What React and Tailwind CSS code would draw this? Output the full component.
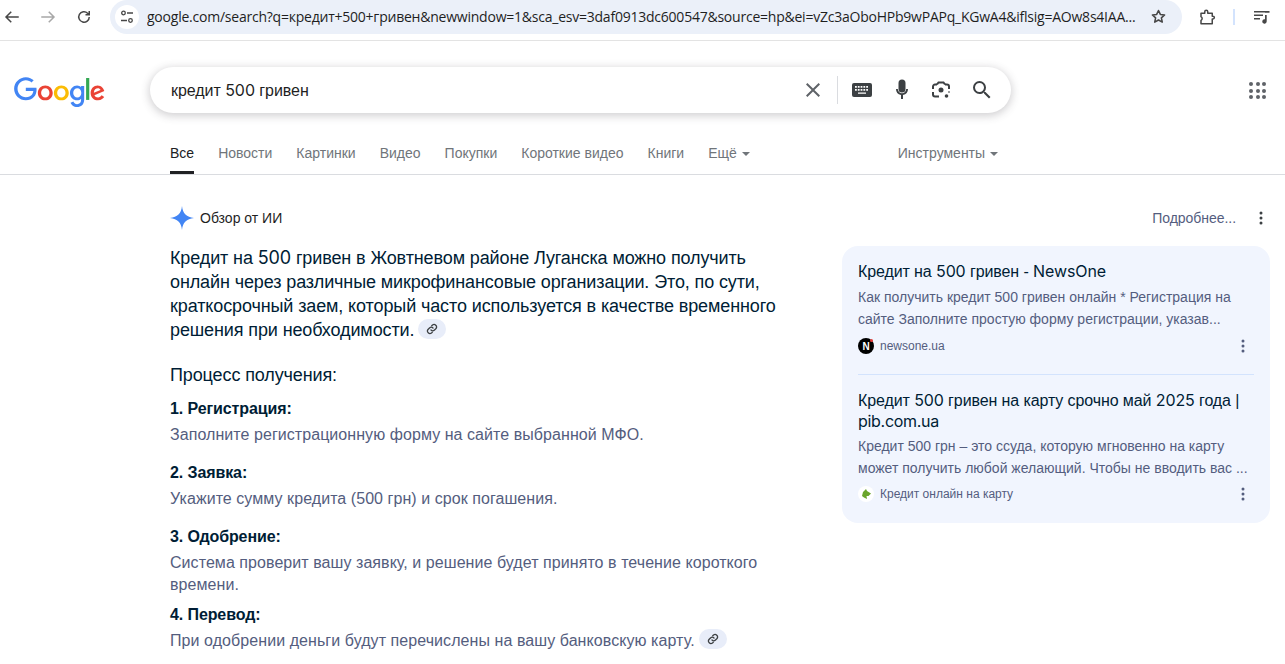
import React from "react";

const Dots = ({ className = "" }) => (
  <svg width="16" height="16" viewBox="0 0 16 16" className={className} fill="currentColor">
    <circle cx="8" cy="3" r="1.5" /><circle cx="8" cy="8" r="1.5" /><circle cx="8" cy="13" r="1.5" />
  </svg>
);

const LinkChip = () => (
  <span className="inline-flex items-center justify-center w-[28px] h-[20px] rounded-full bg-[#e8edf9] align-[1px] ml-[4px]">
    <svg width="12" height="12" viewBox="0 0 24 24" fill="none" stroke="#3c4043" strokeWidth="2.6" strokeLinecap="round">
      <path d="M10 14a5 5 0 0 0 7 0l3-3a5 5 0 0 0-7-7l-1.500 1.500" />
      <path d="M14 10a5 5 0 0 0-7 0l-3 3a5 5 0 0 0 7 7l1.500-1.500" />
    </svg>
  </span>
);

const Caret = () => <span className="inline-block w-0 h-0 border-x-[4px] border-x-transparent border-t-[4px] border-t-[#70757a] ml-[5px] align-[2px]" />;
const G = ({ children }) => <span className="font-['Inter',sans-serif]">{children}</span>;

const tabs = ["Новости", "Картинки", "Видео", "Покупки", "Короткие видео", "Книги"];

const steps = [
  ["1. Регистрация:", "Заполните регистрационную форму на сайте выбранной МФО.", "h-[64px]"],
  ["2. Заявка:", "Укажите сумму кредита (500 грн) и срок погашения.", "h-[64px]"],
  ["3. Одобрение:", "Система проверит вашу заявку, и решение будет принято в течение короткого времени.", "h-[78px]"],
];

export default function App() {
  return (
    <div className="w-[1285px] h-[664px] overflow-hidden bg-white font-['Liberation_Sans',sans-serif]">
      {/* Browser bar */}
      <div className="h-[41px] border-b border-[#e3e3e3] flex items-center">
        <div className="flex items-center w-[110px] pl-[3px] gap-[18px] text-[#474747] -mt-[6px]">
          <svg width="18" height="18" viewBox="0 0 24 24" fill="none" stroke="#474747" strokeWidth="2"><path d="M21 12H4M11 5l-7 7 7 7" /></svg>
          <svg width="18" height="18" viewBox="0 0 24 24" fill="none" stroke="#a8a8a8" strokeWidth="2"><path d="M3 12h17M13 5l7 7-7 7" /></svg>
          <svg width="18" height="18" viewBox="0 0 24 24" fill="none" stroke="#474747" strokeWidth="2"><path d="M19 12a7 7 0 1 1-2.200-5.100L19 9M19 4v5h-5" /></svg>
        </div>
        <div className="w-[1072px] h-[34px] -mt-[7px] rounded-full bg-[#ebf0f9] flex items-center pl-[5px] pr-[13px]">
          <div className="w-[24px] h-[24px] rounded-full bg-white flex items-center justify-center shrink-0">
            <svg width="14" height="14" viewBox="0 0 14 14" fill="none" stroke="#474747" strokeWidth="1.3"><circle cx="3.5" cy="3" r="1.8" /><path d="M7 3h6M1 10.500h6" /><circle cx="10.500" cy="10.500" r="1.800" /></svg>
          </div>
          <span className="ml-[8px] w-[990px] shrink-0 text-[14px] text-[#1f1f1f] whitespace-nowrap overflow-hidden font-['Open_Sans',sans-serif] tracking-[-0.23px]">google.com/search?q=кредит+500+гривен&amp;newwindow=1&amp;sca_esv=3daf0913dc600547&amp;source=hp&amp;ei=vZc3aOboHPb9wPAPq_KGwA4&amp;iflsig=AOw8s4IAA...</span>
          <svg className="ml-[13px]" width="17" height="17" viewBox="0 0 24 24" fill="none" stroke="#474747" strokeWidth="2.2" strokeLinejoin="round"><path d="M12 3.500l2.600 5.600 6 .7-4.500 4.100 1.200 6L12 17l-5.300 2.900 1.200-6L3.400 9.800l6-.7z" /></svg>
        </div>
        <div className="flex items-center ml-[16px] -mt-[7px]">
          <svg width="18" height="18" viewBox="0 0 24 24" fill="none" stroke="#474747" strokeWidth="2" strokeLinejoin="round"><path d="M4 7h5V5a2 2 0 0 1 4 0v2h6v4h1a1.800 1.800 0 0 1 0 3.600h-1V21H4v-4.500a2.800 2.800 0 0 0 0-5z" /></svg>
          <div className="ml-[17px] w-[2px] h-[16px] bg-[#d3e3fd]" />
          <svg className="ml-[18px]" width="18" height="18" viewBox="0 0 18 18" fill="#474747"><path d="M1 3h11v1.500H1zM1 6.500h9V8H1zM1 10h6v1.500H1z" /><path d="M12 7h1.700v6.500a2.200 2.200 0 1 1-1.700-2.200zM12 3h4.500v1.700H12z" /></svg>
        </div>
      </div>

      {/* Search header */}
      <div className="h-[96px] flex items-start pt-[26px]">
        <div className="w-[150px] pl-[14px] pt-[10px] shrink-0">
          <svg width="91" height="31" viewBox="0 0 272 92" preserveAspectRatio="none">
            <path fill="#EA4335" d="M115.750 47.180c0 12.770-9.990 22.180-22.250 22.180s-22.250-9.410-22.250-22.180C71.250 34.320 81.240 25 93.500 25s22.250 9.320 22.250 22.180zm-9.740 0c0-7.980-5.790-13.440-12.510-13.440S80.990 39.200 80.990 47.180c0 7.900 5.790 13.440 12.510 13.440s12.510-5.550 12.510-13.440z" />
            <path fill="#FBBC05" d="M163.750 47.180c0 12.770-9.990 22.180-22.250 22.180s-22.250-9.410-22.250-22.180c0-12.850 9.990-22.180 22.250-22.180s22.250 9.320 22.250 22.180zm-9.740 0c0-7.980-5.790-13.440-12.510-13.440s-12.510 5.460-12.510 13.440c0 7.900 5.790 13.440 12.510 13.440s12.510-5.550 12.510-13.440z" />
            <path fill="#4285F4" d="M209.750 26.340v39.820c0 16.380-9.660 23.070-21.080 23.070-10.750 0-17.220-7.190-19.660-13.070l8.480-3.530c1.510 3.610 5.210 7.870 11.170 7.870 7.310 0 11.840-4.510 11.840-13v-3.190h-.34c-2.180 2.690-6.380 5.040-11.680 5.040-11.090 0-21.250-9.660-21.250-22.090 0-12.520 10.160-22.260 21.250-22.260 5.290 0 9.490 2.350 11.680 4.960h.34v-3.610h9.250zm-8.560 20.920c0-7.810-5.210-13.520-11.840-13.520-6.720 0-12.350 5.710-12.350 13.520 0 7.730 5.630 13.360 12.350 13.360 6.630 0 11.840-5.630 11.840-13.360z" />
            <path fill="#34A853" d="M225 3v65h-9.500V3h9.500z" />
            <path fill="#EA4335" d="M262.020 54.480l7.560 5.040c-2.440 3.610-8.320 9.830-18.490 9.830-12.610 0-22.030-9.750-22.030-22.180 0-13.180 9.500-22.180 20.940-22.180 11.520 0 17.160 9.170 19 14.120l1.010 2.520-29.660 12.280c2.270 4.450 5.800 6.720 10.750 6.720 4.960 0 8.400-2.440 10.920-6.150zm-23.280-7.980l19.830-8.230c-1.090-2.770-4.370-4.700-8.230-4.700-4.950 0-11.840 4.370-11.600 12.930z" />
            <path fill="#4285F4" d="M35.290 41.410V32H67c.31 1.640.47 3.580.47 5.680 0 7.060-1.930 15.790-8.150 22.010-6.050 6.300-13.780 9.660-24.020 9.660C16.320 69.350.36 53.890.36 34.910.36 15.930 16.320.470 35.300.470c10.500 0 17.980 4.120 23.600 9.490l-6.640 6.640c-4.030-3.780-9.490-6.720-16.970-6.720-13.860 0-24.700 11.170-24.700 25.030 0 13.860 10.840 25.030 24.700 25.030 8.990 0 14.110-3.610 17.390-6.890 2.660-2.660 4.410-6.460 5.100-11.650l-22.490.010z" />
          </svg>
        </div>
        <div className="w-[861px] h-[46px] rounded-full bg-white shadow-[0_2px_8px_1px_rgba(64,60,67,0.24)] flex items-center pl-[21px] shrink-0">
          <span className="text-[16px] text-[#1f1f1f] w-[626px] shrink-0 tracking-[-0.05px]">кредит <G>500</G> гривен</span>
          <svg width="24" height="24" viewBox="0 0 24 24" fill="#5f6368" className="ml-[4px]"><path d="M19 6.410 17.590 5 12 10.590 6.410 5 5 6.410 10.590 12 5 17.590 6.410 19 12 13.410 17.590 19 19 17.590 13.410 12z" /></svg>
          <div className="w-px h-[28px] bg-[#dadce0] ml-[12px]" />
          <svg width="20" height="14" viewBox="0 0 20 14" className="ml-[14px]" fill="#3c4043"><path d="M2 0h16a2 2 0 0 1 2 2v10a2 2 0 0 1-2 2H2a2 2 0 0 1-2-2V2a2 2 0 0 1 2-2z" /><path fill="#fff" d="M3 3h1.800v1.800H3zM5.800 3h1.800v1.800H5.800zM8.600 3h1.800v1.800H8.600zM11.400 3h1.800v1.800h-1.800zM14.200 3H16v1.800h-1.800zM3 6h1.800v1.800H3zM5.800 6h1.800v1.800H5.800zM8.600 6h1.800v1.800H8.600zM11.400 6h1.800v1.800h-1.800zM14.200 6H16v1.800h-1.800zM6 9.500h8v1.300H6z" /></svg>
          <svg width="24" height="24" viewBox="0 0 24 24" className="ml-[18px]" fill="#3c4043"><path d="M12 14.500a3.500 3.500 0 0 0 3.500-3.500V5a3.500 3.500 0 0 0-7 0v6a3.500 3.500 0 0 0 3.500 3.500z" /><path d="M18 11h-1.800a4.200 4.200 0 0 1-8.400 0H6a6 6 0 0 0 5 5.900V21h2v-4.100A6 6 0 0 0 18 11z" /></svg>
          <svg width="20" height="20" viewBox="0 0 20 20" className="ml-[17px]" fill="none" stroke="#3c4043" strokeWidth="2"><path d="M6 4.500 7.500 2.500h5L14 4.500" /><path d="M2 9V6.500a2 2 0 0 1 2-2h2M14 4.500h2a2 2 0 0 1 2 2V9M2 12v2.500a2 2 0 0 0 2 2h4" /><path d="M18 11.500v1" /><circle cx="10" cy="10" r="2.500" fill="#3c4043" stroke="none" /><circle cx="15.500" cy="16" r="1.800" fill="#3c4043" stroke="none" /></svg>
          <svg width="24" height="24" viewBox="0 0 24 24" className="ml-[19px]" fill="#3c4043"><path d="M15.500 14h-.79l-.28-.27A6.470 6.470 0 0 0 16 9.500 6.500 6.500 0 1 0 9.500 16c1.610 0 3.090-.59 4.230-1.570l.27.28v.79l5 4.990L20.490 19l-4.990-5zm-6 0C7.010 14 5 11.990 5 9.500S7.010 5 9.500 5 14 7.010 14 9.500 11.990 14 9.500 14z" /></svg>
        </div>
        <div className="ml-[238px] mt-[15px] grid grid-cols-3 gap-[2.500px] w-[17px] shrink-0">
          {Array.from({ length: 9 }).map((_, i) => <span key={i} className="w-[4px] h-[4px] rounded-full bg-[#5f6368]" />)}
        </div>
      </div>

      {/* Tabs */}
      <div className="h-[38px] border-b border-[#dadce0] pl-[170px] flex items-start text-[14px] text-[#70757a]">
        <div className="h-[37px] flex flex-col justify-end mr-[24px]">
          <span className="text-[#202124] leading-[16px] pb-[10px]">Все</span>
          <div className="h-[3px] bg-[#202124]" />
        </div>
        {tabs.map((t) => <span key={t} className="mr-[24px] mt-[8px] leading-[16px]">{t}</span>)}
        <span className="mt-[8px] leading-[16px] whitespace-nowrap">Ещё<Caret /></span>
        <span className="ml-[148px] mt-[8px] leading-[16px] whitespace-nowrap">Инструменты<Caret /></span>
      </div>

      {/* Body */}
      <div className="flex">
        <div className="w-[672px] ml-[170px] shrink-0">
          <div className="h-[71px] flex items-center pt-[15px]">
            <svg width="24" height="24" viewBox="0 0 24 24"><path fill="#4285f4" d="M12 0C12.800 7.500 16.500 11.200 24 12 16.500 12.800 12.800 16.500 12 24 11.200 16.500 7.500 12.800 0 12 7.500 11.200 11.200 7.500 12 0z" /></svg>
            <span className="ml-[6px] text-[14px] text-[#1f1f1f]">Обзор от ИИ</span>
          </div>
          <div className="w-[620px] text-[18px] leading-[24px] text-[#001d35] tracking-[-0.115px]">
            <p>Кредит на <G>500</G> гривен в Жовтневом районе Луганска можно получить</p>
            <p>онлайн через различные микрофинансовые организации. Это, по сути, краткосрочный заем, который часто используется в качестве временного решения при необходимости.<LinkChip /></p>
          </div>
          <p className="mt-[21px] text-[18px] leading-[24px] text-[#001d35] tracking-[-0.115px]">Процесс получения:</p>
          <div className="mt-[11px]">
            {steps.map(([h, t, cls]) => (
              <div key={h} className={cls}>
                <div className="text-[16px] font-bold leading-[22px] text-[#001d35] tracking-[-0.1px]">{h}</div>
                <div className="mt-[4px] text-[16px] leading-[22px] text-[#545d7e] w-[620px] tracking-[0.06px]">{t}</div>
              </div>
            ))}
            <div>
              <div className="text-[16px] font-bold leading-[22px] text-[#001d35] tracking-[-0.1px]">4. Перевод:</div>
              <div className="mt-[3px] text-[16px] leading-[22px] text-[#545d7e] tracking-[0.07px]">При одобрении деньги будут перечислены на вашу банковскую карту.<LinkChip /></div>
            </div>
          </div>
        </div>

        <div className="w-[428px] shrink-0">
          <div className="h-[71px] flex items-center justify-end pt-[15px] pr-[1px]">
            <span className="text-[14px] text-[#545d7e] tracking-[-0.05px]">Подробнее...</span>
            <Dots className="ml-[17px] text-[#3c4043]" />
          </div>
          <div className="rounded-[16px] bg-[#f1f5fe] px-[16px] pt-[14px] pb-[17px] w-[428px]">
            <div className="text-[16px] leading-[22px] text-[#001d35] tracking-[-0.1px]">Кредит на <G>500</G> гривен - <G>NewsOne</G></div>
            <div className="mt-[3px] text-[14px] leading-[22px] text-[#545d7e]">Как получить кредит 500 гривен онлайн * Регистрация на<br />сайте Заполните простую форму регистрации, указав...</div>
            <div className="flex items-center h-[24px] mt-[4px]">
              <span className="w-[16px] h-[16px] rounded-full bg-black text-white text-[10px] font-bold flex items-center justify-center relative">N<span className="absolute top-[1px] right-[1px] w-[3px] h-[3px] rounded-full bg-[#e53935]" /></span>
              <span className="ml-[6px] text-[12px] text-[#545d7e]">newsone.ua</span>
              <Dots className="ml-auto mr-[3px] text-[#545d7e]" />
            </div>
            <div className="h-px bg-[#d3e3fd] mt-[16px]" />
            <div className="mt-[15px] text-[16px] leading-[20px] text-[#001d35] tracking-[-0.1px]">
              <div>Кредит <G>500</G> гривен на карту срочно май <G>2025</G> года |</div>
              <div className="font-['Inter',sans-serif] tracking-[-0.3px]">pib.com.ua</div>
            </div>
            <div className="mt-[4px] text-[14px] leading-[22px] text-[#545d7e] whitespace-nowrap">Кредит 500 грн – это ссуда, которую мгновенно на карту<br />может получить любой желающий. Чтобы не вводить вас ...</div>
            <div className="flex items-center h-[24px] mt-[3px]">
              <span className="w-[16px] h-[16px] rounded-full bg-white flex items-center justify-center">
                <svg width="12" height="12" viewBox="0 0 12 12"><path fill="#6aa52c" d="M6 1 7 3 11 5.500 8.500 8 6.500 8 7 11 4 9.500 2 8 3 4z" /></svg>
              </span>
              <span className="ml-[6px] text-[12px] text-[#545d7e]">Кредит онлайн на карту</span>
              <Dots className="ml-auto mr-[3px] text-[#545d7e]" />
            </div>
          </div>
        </div>
      </div>
    </div>
  );
}
